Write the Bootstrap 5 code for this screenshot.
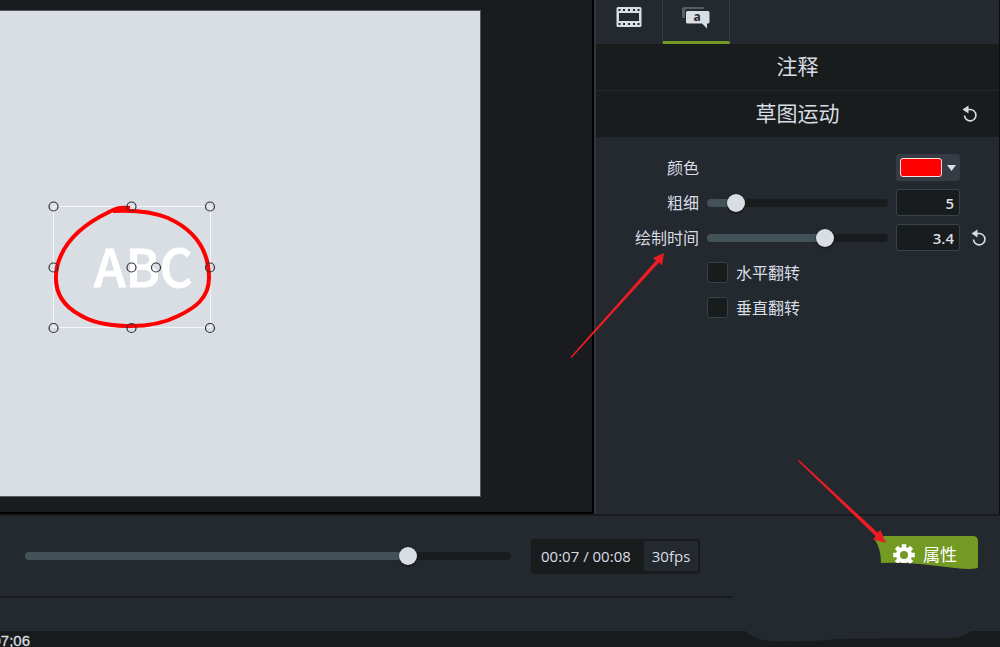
<!DOCTYPE html>
<html lang="zh-CN">
<head>
<meta charset="utf-8">
<meta name="viewport" content="width=device-width, initial-scale=1">
<title>草图运动</title>
<link href="https://cdn.jsdelivr.net/npm/bootstrap@5.3.0/dist/css/bootstrap.min.css" rel="stylesheet">
<style>
:root { --panel: #24282f; --dark: #181c1d; --light: #d9dde4; --fill: #435257; --line: #3a4248; --green: #739a22; }
body { background: var(--panel); color: var(--light); font-family: "Open Sans", "Noto Sans CJK SC", sans-serif; font-size: 15px; line-height: 24px; }
.stage { flex: 0 0 59.4%; background: #191b1f; border-right: 2px solid #000; border-bottom: 2px solid #000; padding: 10px 111px 15px 0; }
.preview { background: var(--light); border: 1px solid #55585c; border-left: 0; }
.sketch { left: 40px; top: 179px; }
.abc { font: 500 51px "Noto Sans CJK SC", sans-serif; stroke: #fff; stroke-width: 1px; }
.side { border-left: 2px solid #30363b; border-right: 1px solid #0c0e0f; }
.tabs { height: 44px; }
.tab-btn { width: 67px; border: 0; border-right: 1px solid #383d44; background: none; padding: 0 0 12px; color: var(--light); }
.tab-btn.active { border-bottom: 3px solid var(--green); padding: 0 0 8px; }
.section-head { background: var(--dark); height: 46px; font-size: 21px; line-height: 44px; }
.section-head + .section-head { margin-top: 1px; }
.reset-btn { background: none; border: 0; padding: 0; width: 22px; height: 22px; line-height: 0; color: var(--light); }
.head-reset { right: 18px; }
.props { grid-template-columns: 103px 1fr 64px 22px; column-gap: 8px; row-gap: 8px; grid-auto-rows: 27px; padding: 17px 9px 0 0; font-size: 16px; }
.props label { line-height: 24px; }
.swatch-btn { background: #363c44; border: 0; border-radius: 3px; padding: 0 4px; height: 27px; }
.swatch { width: 42px; height: 19px; background: #f00; border: 1px solid #f4dede; border-radius: 3px; }
.value-box { width: 64px; height: 27px; background: var(--dark); border: 1px solid #364348; border-radius: 3px; color: var(--light); text-align: right; padding: 0 5px; font-size: 15px; font-weight: 600; }
.tick { appearance: none; width: 21px; height: 21px; background: var(--dark); border: 1px solid #364348; border-radius: 3px; margin: 0; }
.tick:checked { background: var(--green); }
.slide { appearance: none; -webkit-appearance: none; width: 100%; height: 20px; margin: 0; background: none; }
.slide::-webkit-slider-runnable-track { height: 8px; border-radius: 4px; background: linear-gradient(to right, var(--fill) var(--at), var(--dark) var(--at)); }
.slide::-webkit-slider-thumb { -webkit-appearance: none; width: 18px; height: 18px; margin-top: -5px; border-radius: 50%; background: var(--light); box-shadow: 0 1px 2px #000a; }
.pointer-a { right: 333px; top: 114px; }
.pointer-b { right: 90px; bottom: 50px; }
.player { height: 84px; border-top: 2px solid var(--dark); border-bottom: 2px solid var(--dark); padding-left: 25px; padding-right: 22px; }
.scrub { flex: 0 1 486px; }
.clock { background: var(--dark); border-radius: 3px; margin-left: 20px; padding: 2px; height: 35px; }
.clock-time { padding: 0 13px 0 8px; }
.fps { background: var(--panel); height: 30px; padding: 0 8px; border-radius: 2px; line-height: 30px; }
.prop-btn { width: 103px; height: 34px; margin-bottom: 6px; border: 0; border-radius: 4px; background: var(--green); color: #fff; font-size: 17px; line-height: 24px; padding: 3px 0 0 18px; clip-path: path("M1 1 Q3 0 8 0 H98 Q103 0 103 5 V32 Q95 34 80 32 L45 28 Q20 26 6 27 Q6 13 0 4Z"); }
.strip { height: 33px; }
.ruler { height: 16px; background: #171b1c; }
.timecode { width: 30px; font: 15px/19px "Liberation Sans", sans-serif; -webkit-text-stroke: .3px currentColor; }
.blob { right: 0; bottom: 5px; }
</style>
</head>
<body>
<div class="d-flex flex-column vh-100 overflow-hidden">
  <div class="d-flex flex-grow-1">
    <main class="stage d-flex">
      <div class="preview flex-grow-1 position-relative">
        <svg class="sketch position-absolute" width="190" height="150" fill="none" aria-label="ABC">
          <rect x="13.500" y="16.500" width="157" height="121" stroke="#f5f6f8"/>
          <text class="abc" x="54" y="97" fill="#fff">ABC</text>
          <path d="M90 18C80 17 76 18 69 22C44 34 23 51 17 77C12 103 25 117 40 125C61 138 109 141 138 126C155 118 169 108 169 88C169 56 150 38 128 28C111 21 92 20 73 21" stroke="#f00" stroke-width="4" stroke-linejoin="round"/>
          <g stroke="#303236" stroke-width="1.200">
            <circle cx="13.500" cy="16.500" r="4.500"/><circle cx="91.500" cy="16.500" r="4.500"/><circle cx="170" cy="16.500" r="4.500"/>
            <circle cx="13.500" cy="77.500" r="4.500"/><circle cx="91.500" cy="77.500" r="4.500"/><circle cx="116" cy="77.500" r="4.500"/><circle cx="170" cy="77.500" r="4.500"/>
            <circle cx="13.500" cy="138" r="4.500"/><circle cx="91.500" cy="138" r="4.500"/><circle cx="170" cy="138" r="4.500"/>
          </g>
        </svg>
      </div>
    </main>
    <aside class="side flex-grow-1 d-flex flex-column">
      <div class="tabs d-flex">
        <button class="tab-btn" type="button" aria-label="视频">
          <svg width="26" height="21" viewBox="0 0 26 21"><path fill="currentColor" fill-rule="evenodd" d="M2 0H24Q25.500 0 25.500 1.500V18.500Q25.500 20 24 20H2Q.5 20 .5 18.500V1.500Q.5 0 2 0ZM3 6V14H23V6ZM2.500 2V4H4.500V2ZM7 2V4H9V2ZM12 2V4H14V2ZM17 2V4H19V2ZM21.500 2V4H23.500V2ZM2.500 16V18H4.500V16ZM7 16V18H9V16ZM12 16V18H14V16ZM17 16V18H19V16ZM21.500 16V18H23.500V16Z"/></svg>
        </button>
        <button class="tab-btn active" type="button" aria-label="注释">
          <svg width="28" height="22" viewBox="0 0 28 22"><path fill="#595e66" d="M2 0H21Q22 0 22 2H5Q3 2 3 4V11H1.500Q0 11 0 9.500V2Q0 0 2 0Z"/><path fill="currentColor" d="M5.500 4H26Q27.500 4 27.500 5.500V15Q27.500 16.500 26 16.500H25V21.500L20 16.500H5.500Q4 16.500 4 15V5.500Q4 4 5.500 4Z"/><text x="11.500" y="14" font-family="Open Sans" font-weight="700" font-size="12" fill="#24282f">a</text></svg>
        </button>
      </div>
      <div class="section-head text-center">注释</div>
      <div class="section-head text-center position-relative">草图运动
        <button class="reset-btn head-reset position-absolute top-50 translate-middle-y" type="button" aria-label="重置"><svg width="18" height="20" viewBox="0 0 18 20"><path d="M5 5.500H9A5.700 5.700 0 1 1 3.500 11.500" fill="none" stroke="currentColor" stroke-width="1.600"/><path d="M1.500 5.500L7.500 1.500V9.500Z" fill="currentColor"/></svg></button>
      </div>
      <div class="position-relative flex-grow-1">
        <form class="props d-grid align-items-center">
          <label class="text-end" for="color">颜色</label><span></span>
          <button id="color" class="swatch-btn d-flex align-items-center justify-content-between" type="button" aria-label="颜色"><span class="swatch"></span><svg width="9" height="8"><path d="M0 1H9L4.500 7Z" fill="#d9dde4"/></svg></button><span></span>

          <label class="text-end" for="thick">粗细</label>
          <input id="thick" class="slide" type="range" min="0" max="100" value="12" style="--at:16%">
          <input class="value-box" type="text" value="5" aria-label="粗细"><span></span>

          <label class="text-end" for="time">绘制时间</label>
          <input id="time" class="slide" type="range" min="0" max="100" value="67" style="--at:65%">
          <input class="value-box" type="text" value="3.4" aria-label="绘制时间">
          <button class="reset-btn" type="button" aria-label="重置"><svg width="18" height="20" viewBox="0 0 18 20"><path d="M5 5.500H9A5.700 5.700 0 1 1 3.500 11.500" fill="none" stroke="currentColor" stroke-width="1.600"/><path d="M1.500 5.500L7.500 1.500V9.500Z" fill="currentColor"/></svg></button>

          <span></span><div class="d-flex align-items-center gap-2"><input id="fliph" class="tick" type="checkbox"><label for="fliph">水平翻转</label></div><span></span><span></span>
          <span></span><div class="d-flex align-items-center gap-2"><input id="flipv" class="tick" type="checkbox"><label for="flipv">垂直翻转</label></div><span></span><span></span>
        </form>
        <svg class="pointer-a position-absolute pe-none" width="98" height="110"><path fill="#ed1c24" d="M2.500 106L3.500 107L91 11.500L94 14.500L96 2L85 7L88 9.500Z"/></svg>
      </div>
    </aside>
  </div>
  <footer>
    <div class="player d-flex align-items-center position-relative">
      <div class="scrub d-flex"><input class="slide" type="range" min="0" max="100" value="80" style="--at:79%" aria-label="播放进度"></div>
      <div class="clock d-flex align-items-center"><span class="clock-time">00:07 / 00:08</span><span class="fps">30fps</span></div>
      <button class="prop-btn d-flex align-items-center gap-2 ms-auto" type="button">
        <svg width="22" height="22" viewBox="-11 -11 22 22" fill="#fff"><path fill-rule="evenodd" d="M-8 0A8 8 0 1 1 8 0A8 8 0 1 1-8 0ZM-4 0A4 4 0 1 0 4 0A4 4 0 1 0-4 0Z"/><g stroke="#fff" stroke-width="4.500"><path d="M0-7V-10.800M0 7V10.800M-7 0H-10.800M7 0H10.800M5-5L7.600-7.600M-5-5L-7.600-7.600M5 5L7.600 7.600M-5 5L-7.600 7.600"/></g></svg>属性
      </button>
      <svg class="pointer-b position-absolute pe-none" width="112" height="86" viewBox="0 0 112 86"><path fill="#ed1c24" d="M0 1L1 0L79.500 72.500L82.500 70L88 83L75 79.500L77.500 76Z"/></svg>
    </div>
    <div class="position-relative">
      <div class="strip"></div>
      <div class="ruler overflow-hidden"><div class="timecode d-flex justify-content-end">00:00:07;06</div></div>
      <svg class="blob position-absolute pe-none" width="267" height="46"><path fill="#24282f" d="M0 0H267V35H238Q230 42 218 42L105 43Q80 46 55 45Q26 48 12 35H0Z"/></svg>
    </div>
  </footer>
</div>
<script src="https://cdn.jsdelivr.net/npm/bootstrap@5.3.0/dist/js/bootstrap.bundle.min.js"></script>
</body>
</html>
